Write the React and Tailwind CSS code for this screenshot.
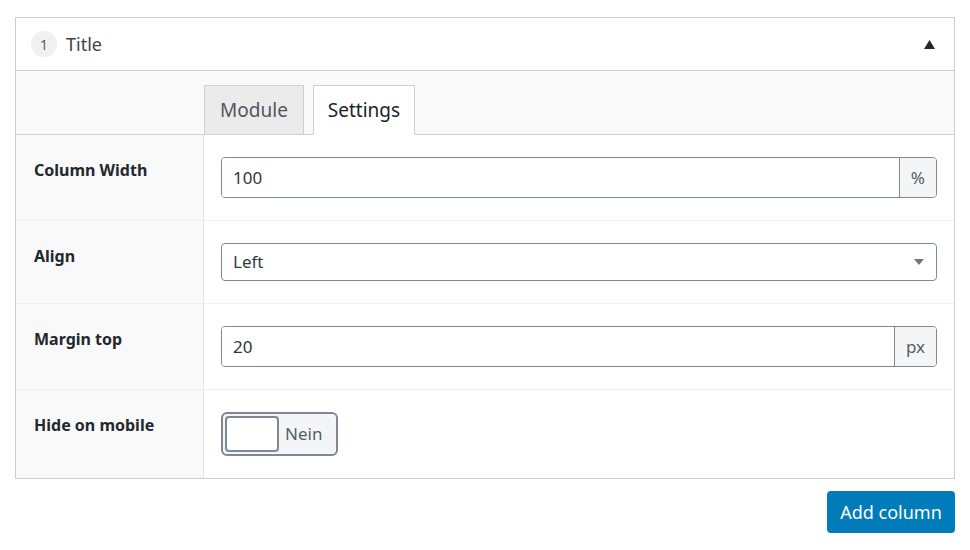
import React, { useState } from 'react';

// Einstellungen der Spalte
const FONT = { fontFamily: '"Noto Sans", "Open Sans", Arial, sans-serif' };

const Row = ({ label, children, last }) => (
    <div className={`flex ${last ? '' : 'border-b border-[#f0f0f0]'}`}>
        <div className="w-[188px] shrink-0 bg-[#f9f9f9] border-r border-[#e5e5e5] pl-[18px] pt-[24px] pb-[20px] text-[16px] font-bold text-[#23282d] leading-[22px]">
            {label}
        </div>
        <div className="flex-1 flex flex-col pl-[17px] pr-[17px] py-[22px]">{children}</div>
    </div>
);

const UnitInput = ({ value, unit }) => (
    <div className="flex h-[41px] border border-[#7e8993] rounded-[4px] overflow-hidden">
        <div className="flex-1 flex items-center pl-[11px] text-[17px] text-[#32373c] bg-white">{value}</div>
        <div className="flex items-center justify-center px-[11px] bg-[#f3f5f6] border-l border-[#7e8993] text-[17px] text-[#555d66]">
            {unit}
        </div>
    </div>
);

export default function App() {
    const [tab, setTab] = useState('settings');

    return (
        <div className="w-[970px] h-[550px] bg-white pt-[17px] pl-[15px] pr-[15px]" style={FONT}>
            <div className="border border-[#ccd0d4]">
                {/* Kopfzeile */}
                <div className="flex items-center h-[53px] bg-white border-b border-[#ccd0d4] pl-[15px] pr-[19px]">
                    <span className="w-[26px] h-[26px] rounded-full bg-[#f0f0f0] flex items-center justify-center text-[14px] text-[#555d66]">1</span>
                    <span className="ml-[9px] text-[18px] text-[#3c434a]">Title</span>
                    <svg className="ml-auto" width="11" height="9" viewBox="0 0 11 9">
                        <path d="M0 9 L5.5 0 L11 9 Z" fill="#23282d" />
                    </svg>
                </div>

                {/* Tabs */}
                <div className="flex items-end h-[64px] bg-[#f9f9f9] border-b border-[#ccd0d4] pl-[188px]">
                    <button
                        onClick={() => setTab('module')}
                        className={`h-[50px] w-[100px] -mb-px border border-[#ccd0d4] text-[19px] ${tab === 'module' ? 'bg-white border-b-white text-[#23282d]' : 'bg-[#ebebeb] text-[#50575e]'}`}
                    >
                        Module
                    </button>
                    <button
                        onClick={() => setTab('settings')}
                        className={`ml-[9px] h-[50px] w-[102px] -mb-px border border-[#ccd0d4] text-[19px] ${tab === 'settings' ? 'bg-white border-b-white text-[#1d2327]' : 'bg-[#ebebeb] text-[#50575e]'}`}
                    >
                        Settings
                    </button>
                </div>

                <Row label="Column Width">
                    <UnitInput value="100" unit="%" />
                </Row>
                <Row label="Align">
                    <div className="flex items-center h-[38px] border border-[#7e8993] rounded-[4px] pl-[11px] pr-[12px] text-[17px] text-[#32373c]">
                        Left
                        <svg className="ml-auto" width="10" height="6" viewBox="0 0 10 6">
                            <path d="M0 0 L10 0 L5 6 Z" fill="#6c7781" />
                        </svg>
                    </div>
                </Row>
                <Row label="Margin top">
                    <UnitInput value="20" unit="px" />
                </Row>
                <Row label="Hide on mobile" last>
                    <div className="flex items-center h-[44px] w-[117px] border-2 border-[#7e8993] rounded-[6px] bg-[#f3f5f6] p-[2px]">
                        <div className="w-[54px] h-[36px] bg-white border-2 border-[#7e8993] rounded-[4px]" />
                        <span className="ml-[6px] text-[17px] text-[#555d66]">Nein</span>
                    </div>
                </Row>
            </div>

            <div className="flex justify-end mt-[12px]">
                <button className="h-[42px] w-[128px] bg-[#007cba] rounded-[4px] text-white text-[18px]">Add column</button>
            </div>
        </div>
    );
}
